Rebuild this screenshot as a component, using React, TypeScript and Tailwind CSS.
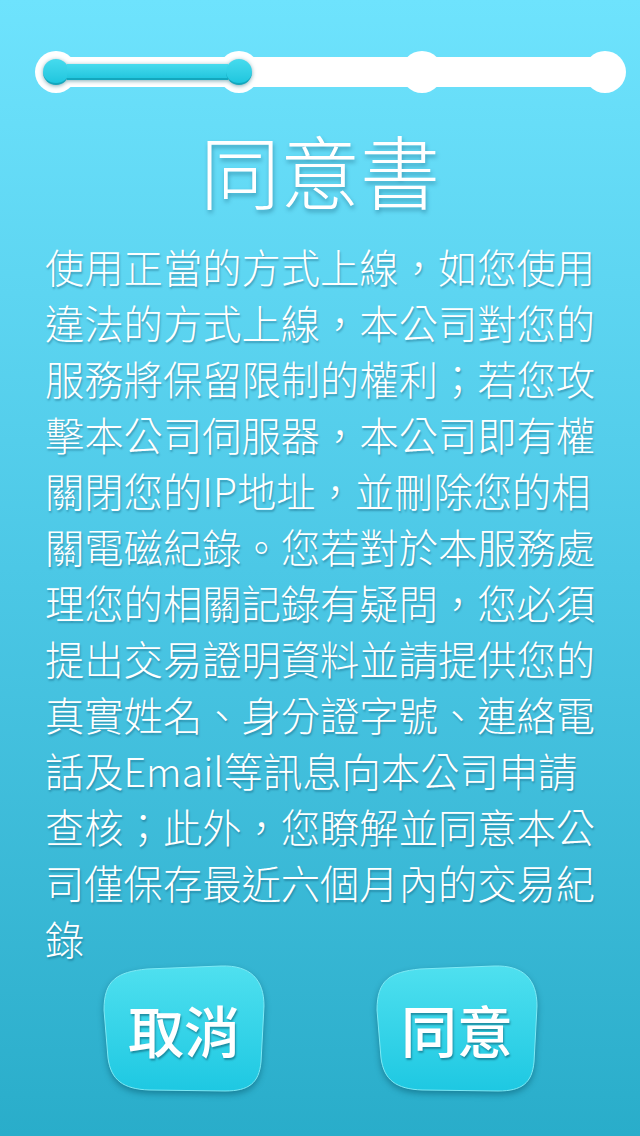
import React from "react";

const lines = [
  "使用正當的方式上線，如您使用",
  "違法的方式上線，本公司對您的",
  "服務將保留限制的權利；若您攻",
  "擊本公司伺服器，本公司即有權",
  "關閉您的IP地址，並刪除您的相",
  "關電磁紀錄。您若對於本服務處",
  "理您的相關記錄有疑問，您必須",
  "提出交易證明資料並請提供您的",
  "真實姓名、身分證字號、連絡電",
  "話及Email等訊息向本公司申請",
  "查核；此外，您瞭解並同意本公",
  "司僅保存最近六個月內的交易紀",
  "錄",
];

function BlobButton({ label, id }: { label: string; id: string }) {
  return (
    <button className="relative w-[162px] h-[130px] flex items-center justify-center">
      <svg
        className="absolute inset-0 drop-shadow-[0_3px_3px_rgba(0,70,90,0.45)]"
        width="162"
        height="130"
        viewBox="0 0 162 130"
      >
        <defs>
          <linearGradient id={id} x1="0" y1="0" x2="0" y2="1">
            <stop offset="0" stopColor="#4fe0ef" />
            <stop offset="1" stopColor="#1ec8e2" />
          </linearGradient>
        </defs>
        <path
          d="M1 46 C1 16 14 8 44 5 L118 2 C148 1 161 16 161 42 L158 98 C156 119 146 127 122 127 L46 126 C20 125 8 116 5 94 Z"
          fill={`url(#${id})`}
          stroke="#7eeaf5"
          strokeWidth="1"
        />
      </svg>
      <span className="relative text-white text-[56px] leading-none font-medium [text-shadow:1px_2px_2px_rgba(0,60,80,0.45)]">
        {label}
      </span>
    </button>
  );
}

export default function App() {
  return (
    <div className="w-[640px] h-[1136px] overflow-hidden bg-gradient-to-b from-[#6ee3fd] via-[#4cc8e6] to-[#29adca] font-['Noto_Sans_CJK_TC','Noto_Sans_CJK_SC',sans-serif] text-white">
      <div className="pt-[51px] px-[35px]">
        <div className="relative w-[591px] h-[42px]">
          <div className="absolute left-[20px] right-[20px] top-[6px] h-[30px] bg-white" />
          <div className="relative flex justify-between">
            <div className="w-[42px] h-[42px] rounded-full bg-white" />
            <div className="w-[42px] h-[42px] rounded-full bg-white" />
            <div className="w-[42px] h-[42px] rounded-full bg-white" />
            <div className="w-[42px] h-[42px] rounded-full bg-white" />
          </div>
          <div className="absolute left-[8px] top-[8px] w-[209px] h-[26px] flex items-center drop-shadow-[0_1px_2px_rgba(0,90,110,0.5)]">
            <div className="w-[26px] h-[26px] rounded-full bg-gradient-to-b from-[#45dbee] to-[#1ec6de] border-b-2 border-[#13a7bd]" />
            <div className="flex-1 -mx-[2px] h-[16px] bg-gradient-to-b from-[#45dbee] to-[#22c6de] border-b-2 border-[#13a7bd]" />
            <div className="w-[26px] h-[26px] rounded-full bg-gradient-to-b from-[#45dbee] to-[#1ec6de] border-b-2 border-[#13a7bd]" />
          </div>
        </div>
      </div>

      <h1 className="mt-[35px] text-center text-[80px] leading-[80px] font-light [text-shadow:1px_3px_4px_rgba(0,60,90,0.35)]">
        同意書
      </h1>

      <div className="mt-[30px] pl-[45px] text-[39.3px] leading-[56px] font-light [text-shadow:1px_2px_2px_rgba(0,60,90,0.35)]">
        {lines.map((line, i) => (
          <div key={i} className="whitespace-nowrap">
            {line}
          </div>
        ))}
      </div>

      <div className="-mt-[2px] flex pl-[103px] gap-[111px]">
        <BlobButton label="取消" id="g1" />
        <BlobButton label="同意" id="g2" />
      </div>
    </div>
  );
}
